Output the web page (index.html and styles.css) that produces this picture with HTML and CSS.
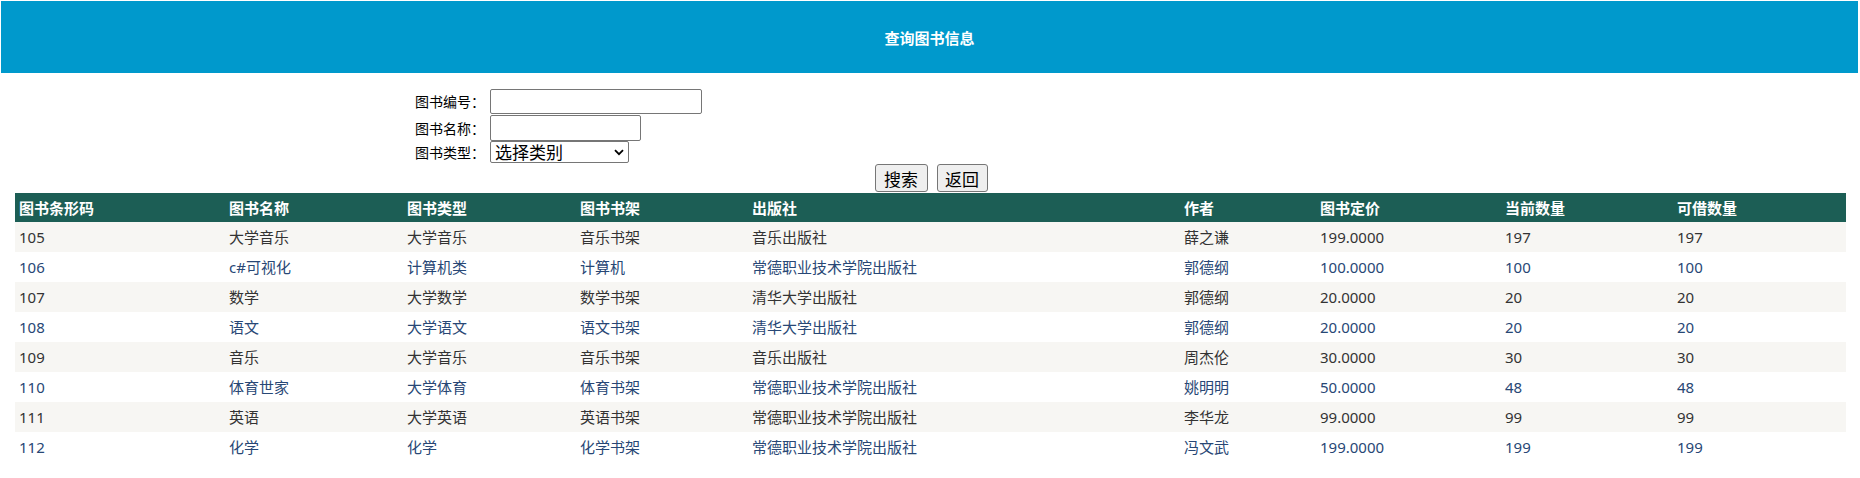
FILE: index.html
```html
<!DOCTYPE html>
<html lang="zh-CN">
<head>
<meta charset="utf-8">
<title>查询图书信息</title>
<link rel="stylesheet" href="styles.css">
</head>
<body>
<div class="topbar">查询图书信息</div>
<form class="search">
  <div class="fields">
    <label class="lbl r1">图书编号：</label>
    <div class="ctl r1"><input class="in-id" type="text"></div>
    <label class="lbl r2">图书名称：</label>
    <div class="ctl r2"><input class="in-name" type="text"></div>
    <label class="lbl r3">图书类型：</label>
    <div class="ctl r3">
      <div class="selwrap">
        <select class="sel">
          <option>选择类别</option>
        </select>
        <svg class="chev" width="10" height="7" viewBox="0 0 10 7"><path d="M1 1.2 L5 5.2 L9 1.2" fill="none" stroke="#000" stroke-width="1.8"/></svg>
      </div>
    </div>
  </div>
  <div class="buttons">
    <button type="button" class="btn btn-search">搜索</button>
    <button type="button" class="btn btn-back">返回</button>
  </div>
</form>
<table class="grid">
  <colgroup>
    <col class="c1"><col class="c2"><col class="c3"><col class="c4"><col class="c5"><col class="c6"><col class="c7"><col class="c8"><col class="c9">
  </colgroup>
  <thead>
    <tr><th>图书条形码</th><th>图书名称</th><th>图书类型</th><th>图书书架</th><th>出版社</th><th>作者</th><th>图书定价</th><th>当前数量</th><th>可借数量</th></tr>
  </thead>
  <tbody>
    <tr class="odd"><td>105</td><td>大学音乐</td><td>大学音乐</td><td>音乐书架</td><td>音乐出版社</td><td>薛之谦</td><td>199.0000</td><td>197</td><td>197</td></tr>
    <tr class="even"><td>106</td><td>c#可视化</td><td>计算机类</td><td>计算机</td><td>常德职业技术学院出版社</td><td>郭德纲</td><td>100.0000</td><td>100</td><td>100</td></tr>
    <tr class="odd"><td>107</td><td>数学</td><td>大学数学</td><td>数学书架</td><td>清华大学出版社</td><td>郭德纲</td><td>20.0000</td><td>20</td><td>20</td></tr>
    <tr class="even"><td>108</td><td>语文</td><td>大学语文</td><td>语文书架</td><td>清华大学出版社</td><td>郭德纲</td><td>20.0000</td><td>20</td><td>20</td></tr>
    <tr class="odd"><td>109</td><td>音乐</td><td>大学音乐</td><td>音乐书架</td><td>音乐出版社</td><td>周杰伦</td><td>30.0000</td><td>30</td><td>30</td></tr>
    <tr class="even"><td>110</td><td>体育世家</td><td>大学体育</td><td>体育书架</td><td>常德职业技术学院出版社</td><td>姚明明</td><td>50.0000</td><td>48</td><td>48</td></tr>
    <tr class="odd"><td>111</td><td>英语</td><td>大学英语</td><td>英语书架</td><td>常德职业技术学院出版社</td><td>李华龙</td><td>99.0000</td><td>99</td><td>99</td></tr>
    <tr class="even"><td>112</td><td>化学</td><td>化学</td><td>化学书架</td><td>常德职业技术学院出版社</td><td>冯文武</td><td>199.0000</td><td>199</td><td>199</td></tr>
  </tbody>
</table>
</body>
</html>
```
FILE: styles.css
```css
html, body {
  margin: 0;
  padding: 0;
  background: #ffffff;
}
body {
  font-family: "Noto Sans", "Noto Sans CJK SC", sans-serif;
  color: #000000;
}
.topbar {
  margin: 1px 2px 0 1px;
  height: 72px;
  background: #0099cc;
  color: #ffffff;
  font-family: "Noto Sans CJK SC", sans-serif;
  font-size: 15px;
  font-weight: bold;
  display: flex;
  align-items: center;
  justify-content: center;
  line-height: 1;
}
.search {
  margin: 15px 0 0 0;
}
.fields {
  display: grid;
  grid-template-columns: 75px auto;
  margin-left: 415px;
  width: 300px;
}
.lbl {
  font-family: "Noto Sans CJK SC", sans-serif;
  font-size: 14px;
  line-height: 1;
  display: flex;
  align-items: center;
  white-space: nowrap;
}
.ctl {
  display: flex;
  align-items: center;
}
.r1 { height: 26px; }
.r2 { height: 27px; }
.r3 { height: 22px; }
input {
  box-sizing: border-box;
  border: 1px solid #767676;
  border-radius: 2px;
  background: #ffffff;
  padding: 1px 2px;
  margin: 0;
  font-size: 13px;
}
.in-id { width: 212px; height: 25px; }
.in-name { width: 151px; height: 26px; margin-top: 1px; }
.selwrap {
  position: relative;
  width: 139px;
  height: 22px;
}
.sel {
  appearance: none;
  -webkit-appearance: none;
  box-sizing: border-box;
  display: block;
  width: 139px;
  height: 22px;
  margin: 0;
  border: 1px solid #767676;
  border-radius: 2px;
  background: #ffffff;
  color: #000;
  font-family: "Noto Sans CJK SC", sans-serif;
  font-size: 17px;
  padding: 0 18px 0 4px;
  line-height: 20px;
}
.chev {
  position: absolute;
  right: 5px;
  top: 8px;
  pointer-events: none;
}
.buttons {
  display: flex;
  justify-content: center;
  gap: 9px;
  margin: 1px 0 1px 0;
  padding-left: 2px;
}
.btn {
  box-sizing: border-box;
  height: 28px;
  padding: 0 4px;
  border: 1px solid #767676;
  border-radius: 3px;
  background: #efefef;
  color: #000;
  font-family: "Noto Sans CJK SC", sans-serif;
  font-size: 17px;
  line-height: 1;
}
.btn-search { width: 53px; }
.btn-back { width: 51px; }
.grid {
  border-collapse: collapse;
  table-layout: fixed;
  width: 1831px;
  margin-left: 15px;
  font-family: "Noto Sans", "Noto Sans CJK SC", sans-serif;
  font-size: 15px;
}
.c1 { width: 210px; }
.c2 { width: 178px; }
.c3 { width: 173px; }
.c4 { width: 172px; }
.c5 { width: 432px; }
.c6 { width: 136px; }
.c7 { width: 185px; }
.c8 { width: 172px; }
.c9 { width: 173px; }
.grid th, .grid td {
  text-align: left;
  padding: 0 0 0 4px;
  height: 30px;
  line-height: 1;
  white-space: nowrap;
  vertical-align: middle;
}
.grid th {
  background: #1c5e55;
  color: #ffffff;
  font-weight: bold;
  height: 29px;
  font-family: "Noto Sans CJK SC", sans-serif;
}
.grid tr.odd td {
  background: #f7f6f3;
  color: #333333;
}
.grid tr.even td {
  background: #ffffff;
  color: #284775;
}
```
